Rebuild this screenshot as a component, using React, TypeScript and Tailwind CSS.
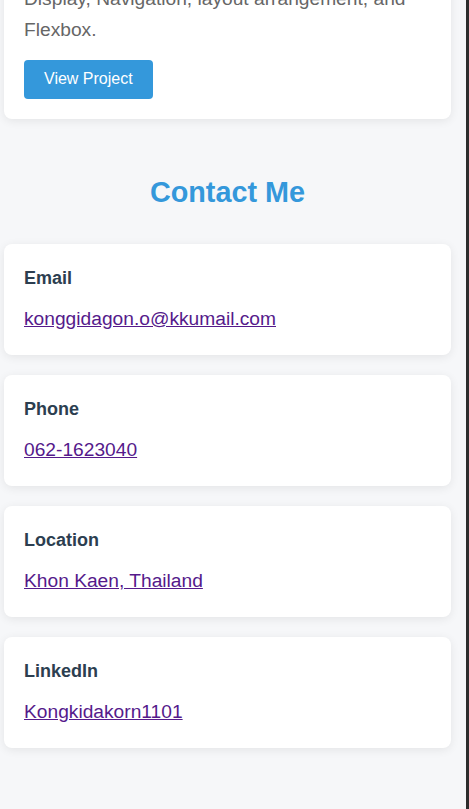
const contacts = [
  { label: "Email", value: "konggidagon.o@kkumail.com", href: "mailto:konggidagon.o@kkumail.com" },
  { label: "Phone", value: "062-1623040", href: "tel:0621623040" },
  { label: "Location", value: "Khon Kaen, Thailand", href: "#location" },
  { label: "LinkedIn", value: "Kongkidakorn1101", href: "#linkedin" },
];

function ContactCard({ label, value, href }: { label: string; value: string; href: string }) {
  return (
    <div className="rounded-lg bg-white p-5 shadow-[0_2px_10px_rgba(0,0,0,0.08)]">
      <h3 className="mb-[11.5px] text-[18px] font-bold leading-[1.6] text-[#2c3e50]">{label}</h3>
      <p className="text-[19.2px] leading-[1.6]">
        <a href={href} className="text-[#551a8b] underline">
          {value}
        </a>
      </p>
    </div>
  );
}

export default function App() {
  return (
    <div className="flex h-[809px] overflow-hidden bg-[#f6f7f9] font-['Liberation_Sans',Arial,sans-serif]">
      <main className="w-[466px] shrink-0">
        {/* page is scrolled: top of project card sits above the viewport */}
        <div className="-mt-[36px] w-[447px] ml-1">
          <div className="rounded-lg bg-white p-5 shadow-[0_2px_10px_rgba(0,0,0,0.08)]">
            <p className="mb-[15px] text-[19.2px] leading-[1.6] text-[#666]">
              Display, Navigation, layout arrangement, and Flexbox.
            </p>
            <button className="rounded-[4px] bg-[#3498db] px-5 py-2.5 text-[16px] leading-[18.4px] text-white">
              View Project
            </button>
          </div>

          <section>
            <h2 className="mt-[50px] mb-[29px] text-center text-[28.8px] font-bold leading-[1.6] text-[#3498db]">
              Contact Me
            </h2>
            <div className="flex flex-col gap-5">
              {contacts.map((c) => (
                <ContactCard key={c.label} {...c} />
              ))}
            </div>
          </section>
        </div>
      </main>
      <div className="w-[3px] shrink-0 bg-[#2d2d2d]" />
    </div>
  );
}
